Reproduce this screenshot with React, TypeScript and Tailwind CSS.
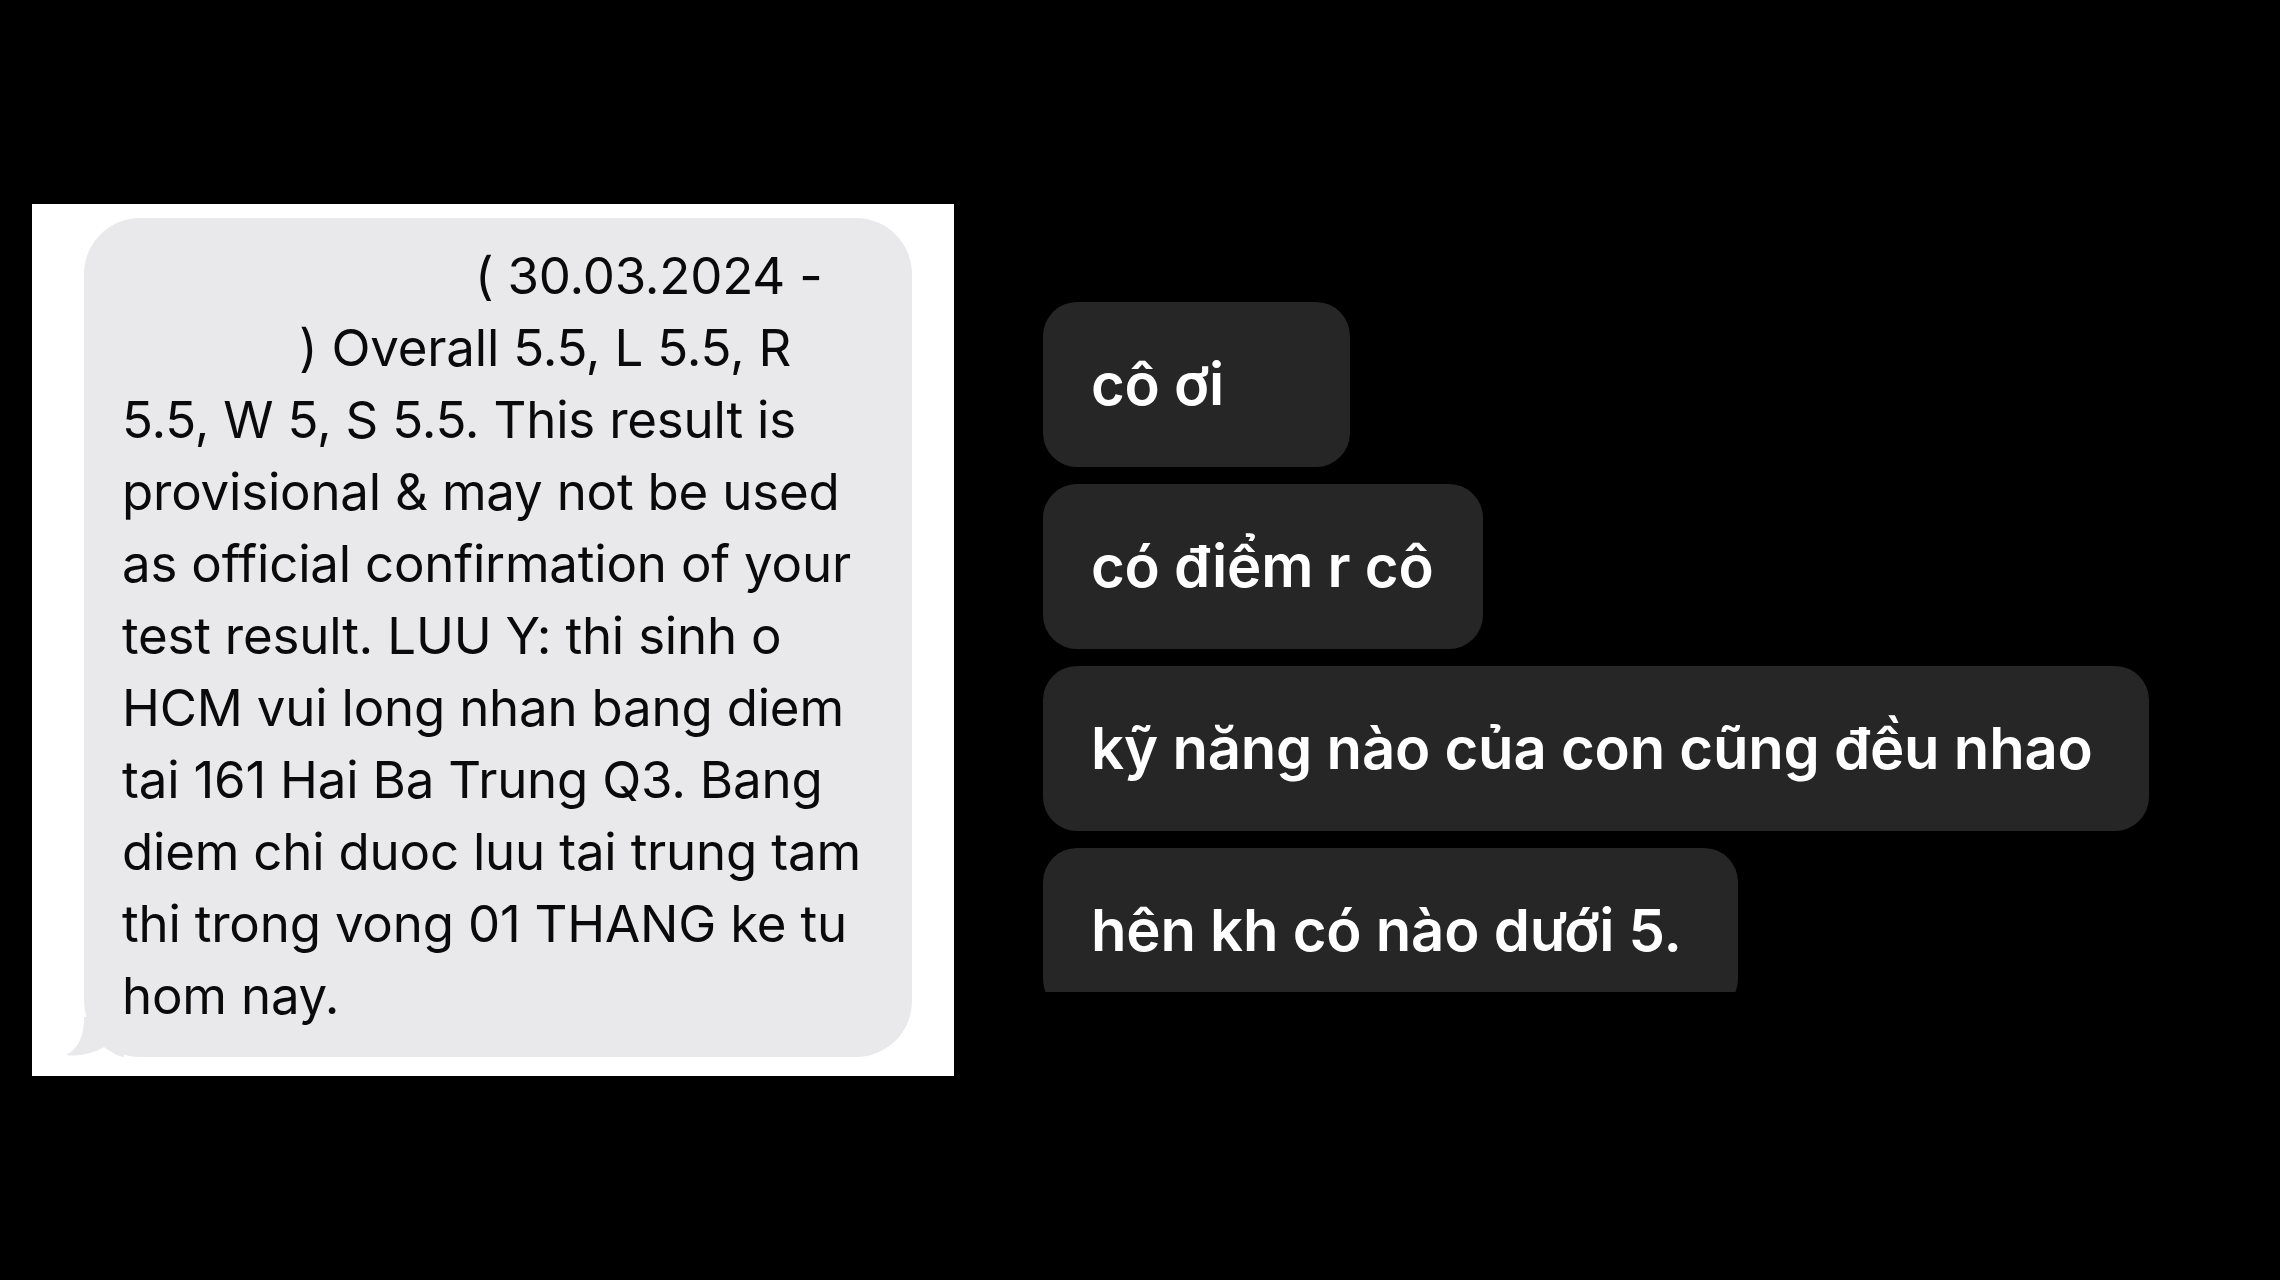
import React from "react";

const smsLines = [
  { text: "( 30.03.2024 -", indent: "pl-[353px]" },
  { text: ") Overall 5.5, L 5.5, R", indent: "pl-[177px]" },
  { text: "5.5, W 5, S 5.5. This result is", indent: "" },
  { text: "provisional & may not be used", indent: "" },
  { text: "as official confirmation of your", indent: "" },
  { text: "test result. LUU Y: thi sinh o", indent: "" },
  { text: "HCM vui long nhan bang diem", indent: "" },
  { text: "tai 161 Hai Ba Trung Q3. Bang", indent: "" },
  { text: "diem chi duoc luu tai trung tam", indent: "" },
  { text: "thi trong vong 01 THANG ke tu", indent: "" },
  { text: "hom nay.", indent: "" },
];

const replies = [
  { text: "cô ơi", w: "w-[307px]" },
  { text: "có điểm r cô", w: "w-[440px]" },
  { text: "kỹ năng nào của con cũng đều nhao", w: "w-[1106px]" },
  { text: "hên kh có nào dưới 5.", w: "w-[695px]" },
];

const SmsCard = () => (
  <div className="mt-[204px] w-[922px] h-[872px] bg-white pl-[52px] pr-[42px] pt-[14px]">
    <div className="relative rounded-[56px] bg-[#e9e9eb] pl-[38px] pt-[22px] pb-[24px] h-[839px]">
      {smsLines.map((line, i) => (
        <div
          key={i}
          className={`${line.indent} h-[72px] leading-[72px] text-[51px] text-[#0a0a0a] whitespace-nowrap tracking-[-0.2px]`}
        >
          {line.text}
        </div>
      ))}
      <svg
        className="absolute left-[-20px] bottom-0"
        width="60"
        height="40"
        viewBox="0 0 60 40"
      >
        <path d="M20 0 C20 20 14 32 2 38 C16 40 30 36 40 30 C48 36 56 40 60 40 L60 0 Z" fill="#e9e9eb" />
      </svg>
    </div>
  </div>
);

const ReplyBubble = ({ text, w }: { text: string; w: string }) => (
  <div
    className={`${w} h-[165px] shrink-0 rounded-[34px] bg-[#262626] flex items-center pl-[48px] text-[58px] font-semibold text-white whitespace-nowrap tracking-[-0.2px]`}
  >
    {text}
  </div>
);

export default function App() {
  return (
    <div
      className="w-[2280px] h-[1280px] bg-black flex items-start pl-[32px] gap-[89px] overflow-hidden"
      style={{ fontFamily: "Inter, 'Noto Sans', sans-serif" }}
    >
      <SmsCard />
      <div className="mt-[302px] h-[690px] overflow-hidden flex flex-col gap-[17px]">
        {replies.map((r, i) => (
          <ReplyBubble key={i} text={r.text} w={r.w} />
        ))}
      </div>
    </div>
  );
}
